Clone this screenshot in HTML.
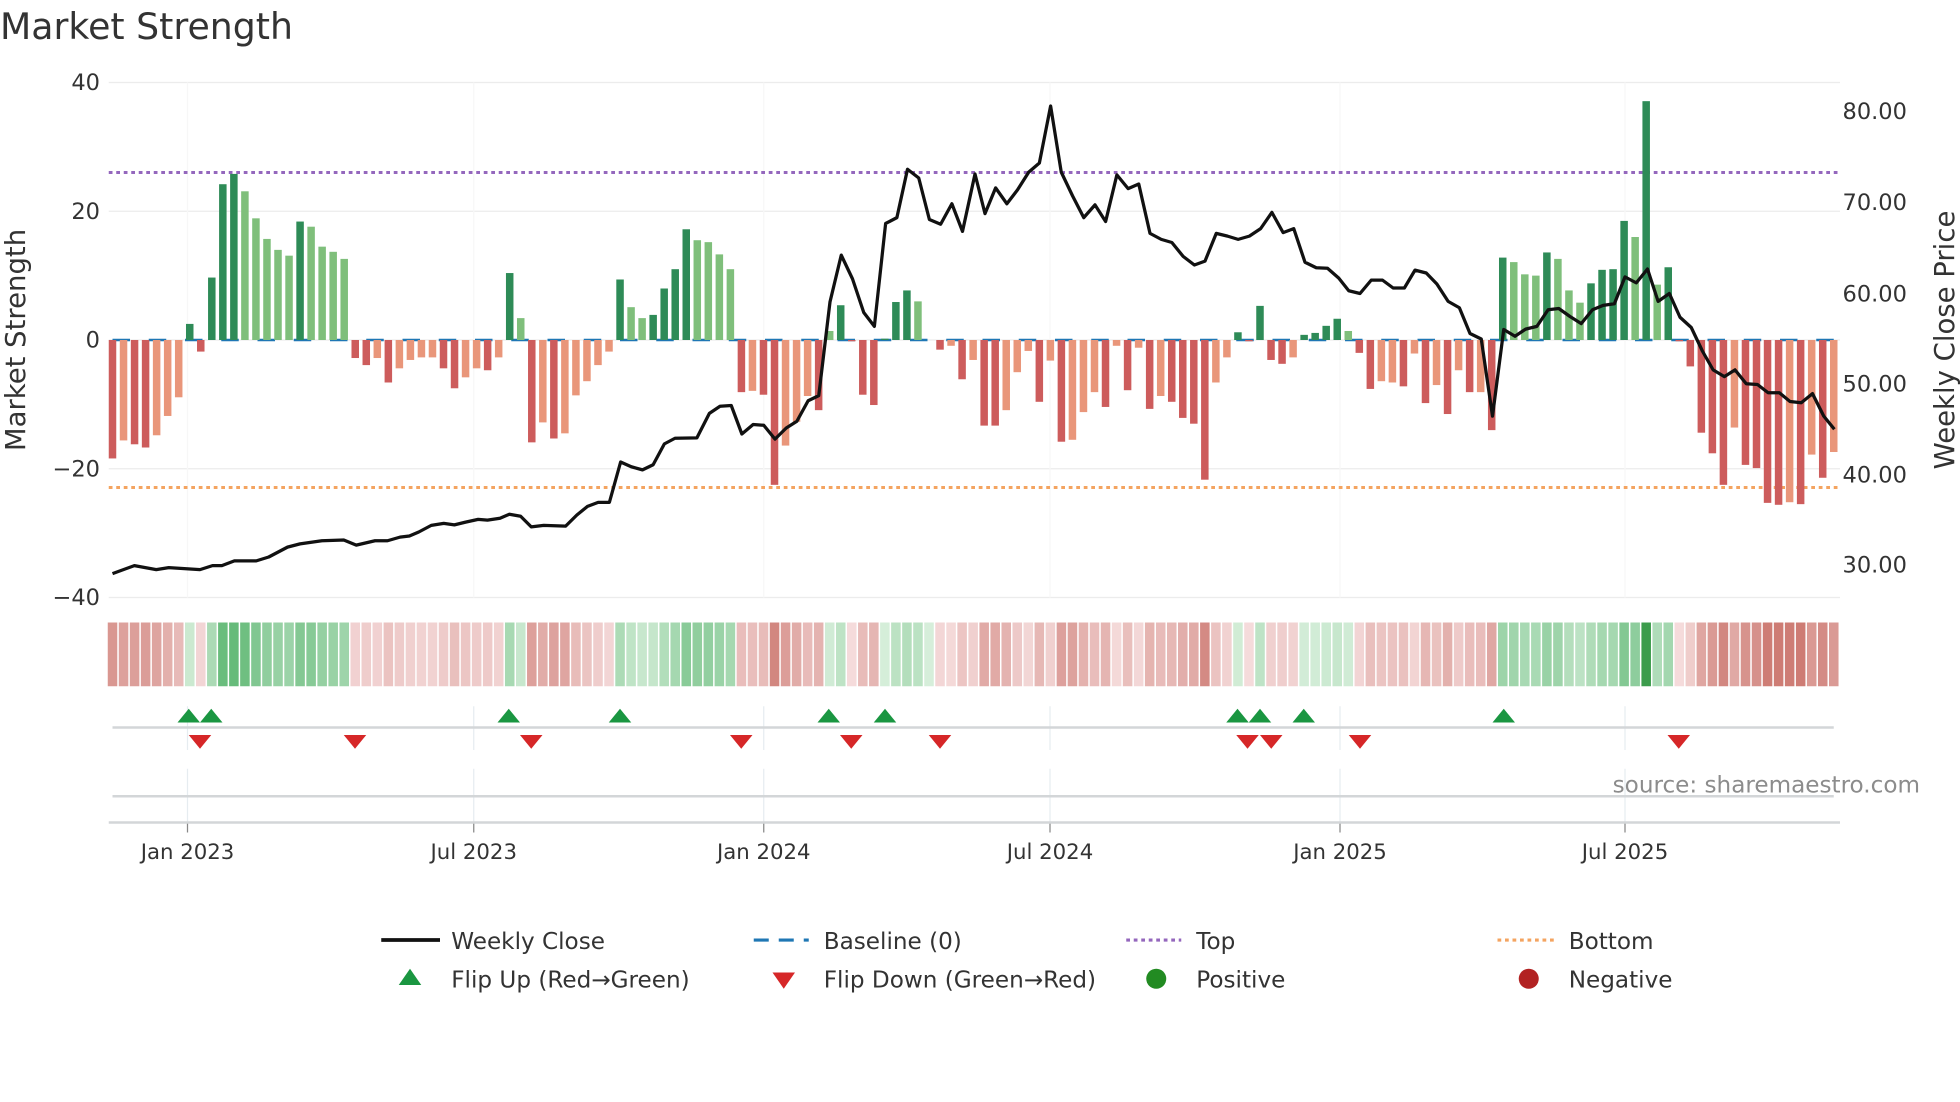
<!DOCTYPE html>
<html><head><meta charset="utf-8">
<style>
html,body{margin:0;padding:0;background:#fff;}
svg{display:block;font-family:"DejaVu Sans","Liberation Sans",sans-serif;}
</style></head>
<body>
<svg id="s" width="1960" height="1102" viewBox="0 0 1568 881.6" xmlns="http://www.w3.org/2000/svg">
<text x="0" y="31" font-size="29" fill="#333">Market Strength</text>
<g id="grid"></g>
<g id="bars"></g>
<g id="strip"></g>
<g id="marks"></g>
<polyline id="line" fill="none" stroke="#111" stroke-width="2.6" stroke-linejoin="round"/>
<g font-size="18" fill="#333" text-anchor="end">
<text x="80" y="72">40</text><text x="80" y="175">20</text><text x="80" y="278">0</text><text x="80" y="381">−20</text><text x="80" y="484">−40</text>
</g>
<g font-size="18" fill="#333">
<text x="1474" y="95">80.00</text><text x="1474" y="168">70.00</text><text x="1474" y="241">60.00</text><text x="1474" y="313">50.00</text><text x="1474" y="386">40.00</text><text x="1474" y="458">30.00</text>
</g>
<text transform="translate(20,272) rotate(-90)" font-size="22" fill="#333" text-anchor="middle">Market Strength</text>
<text transform="translate(1563,272) rotate(-90)" font-size="22" fill="#333" text-anchor="middle">Weekly Close Price</text>
<g font-size="17" fill="#333" text-anchor="middle">
<text x="150" y="687">Jan 2023</text><text x="379" y="687">Jul 2023</text><text x="611" y="687">Jan 2024</text><text x="840" y="687">Jul 2024</text><text x="1072" y="687">Jan 2025</text><text x="1300" y="687">Jul 2025</text>
</g>
<text x="1536" y="634" font-size="18.5" fill="#8c8c8c" text-anchor="end">source: sharemaestro.com</text>
<g font-size="18.5" fill="#333">
<line x1="305" y1="752" x2="352" y2="752" stroke="#111" stroke-width="3"/>
<text x="361" y="759">Weekly Close</text>
<line x1="603" y1="752" x2="647" y2="752" stroke="#1f77b4" stroke-width="2.5" stroke-dasharray="12,8"/>
<text x="659" y="759">Baseline (0)</text>
<line x1="901" y1="752" x2="945" y2="752" stroke="#9467bd" stroke-width="2.5" stroke-dasharray="3,3"/>
<text x="957" y="759">Top</text>
<line x1="1198" y1="752" x2="1243" y2="752" stroke="#f4a460" stroke-width="2.5" stroke-dasharray="3,3"/>
<text x="1255" y="759">Bottom</text>
<polygon points="319,788 337,788 328,775" fill="#1a9641"/>
<text x="361" y="790">Flip Up (Red→Green)</text>
<polygon points="618,778 636,778 627,791" fill="#d62728"/>
<text x="659" y="790">Flip Down (Green→Red)</text>
<circle cx="925" cy="783" r="8" fill="#228b22"/>
<text x="957" y="790">Positive</text>
<circle cx="1223" cy="783" r="8" fill="#b22222"/>
<text x="1255" y="790">Negative</text>
</g>
</svg>
<script>
var NS="http://www.w3.org/2000/svg";
function el(p,t,a){var e=document.createElementNS(NS,t);for(var k in a)e.setAttribute(k,a[k]);p.appendChild(e);return e;}
var data="-18.4R -15.6S -16.2R -16.7R -14.8S -11.8S -8.9S 2.5D -1.8R 9.7D 24.2D 25.8D 23.1L 18.9L 15.7L 14L 13.1L 18.4D 17.6L 14.5L 13.7L 12.6L -2.8R -3.9R -2.8S -6.6R -4.4S -3.1S -2.7S -2.7S -4.4R -7.5R -5.8S -4.4S -4.7R -2.7S 10.4D 3.4L -15.9R -12.8S -15.3R -14.5S -8.6S -6.4S -3.9S -1.8S 9.4D 5.1L 3.4L 3.9D 8D 11D 17.2D 15.5L 15.2L 13.3L 11L -8.1R -7.9S -8.5R -22.5R -16.4S -12.7S -8.7S -10.9R 1.4L 5.4D -0.2R -8.5R -10.1R 0.2D 5.9D 7.7D 6L 0D -1.5R -0.9S -6.1R -3.1S -13.3R -13.3R -10.9S -5S -1.7S -9.6R -3.2S -15.8R -15.5S -11.2S -8.1S -10.4R -0.9S -7.8R -1.2S -10.7R -8.7S -9.6R -12.1R -13R -21.7R -6.6S -2.7S 1.2D -0.2R 5.3D -3.1R -3.7R -2.7S 0.8D 1.1D 2.2D 3.3D 1.4L -2R -7.6R -6.4S -6.6S -7.2R -2.1S -9.8R -7S -11.5R -4.7S -8.1R -8.1S -14R 12.8D 12.1L 10.2L 10L 13.6D 12.6L 7.7L 5.8L 8.8D 10.9D 11D 18.5D 16L 37.1D 8.6L 11.3D -0.2R -4.1R -14.4R -17.6R -22.5R -13.6S -19.4R -19.9R -25.3R -25.6R -25.2S -25.5R -17.8S -21.4R -17.4S".split(" ");
var col={D:"#2e8b57",L:"#7fbf7b",R:"#cd5c5c",S:"#e9967a"};
var grid=document.getElementById("grid"),bars=document.getElementById("bars"),strip=document.getElementById("strip"),marks=document.getElementById("marks");
[66,169,272,375,478].forEach(function(y){el(grid,"line",{x1:87,x2:1472,y1:y,y2:y,stroke:"#ececec","stroke-width":1});});
[150,379,611,840,1072,1300].forEach(function(x){
 el(grid,"line",{x1:x,x2:x,y1:66,y2:478,stroke:"#f7f7f7","stroke-width":1});
 el(grid,"line",{x1:x,x2:x,y1:565,y2:600,stroke:"#e6ecf0","stroke-width":1});
 el(grid,"line",{x1:x,x2:x,y1:615,y2:660,stroke:"#e6ecf0","stroke-width":1});
 el(grid,"line",{x1:x,x2:x,y1:658,y2:666,stroke:"#888","stroke-width":1});
});
var step=(1467-90)/156;
function mix(a,b,t){var r=[];for(var i=0;i<3;i++)r.push(Math.round(a[i]+(b[i]-a[i])*t));return "rgb("+r.join(",")+")";}
data.forEach(function(d,i){
 var v=parseFloat(d),t=d.slice(-1),x=90+i*step;
 var y0=272,y1=272-v*5.15;
 var h=Math.abs(y1-y0);
 if(h>0.3) el(bars,"rect",{x:x-3,y:Math.min(y0,y1),width:6,height:h,fill:col[t]});
 var c;
 if(v>=0){var k=Math.min(v/25,1);c=v>30?"#3c9c4c":mix([214,238,218],[102,187,122],k);}
 else{var k=Math.min(-v/26,1);c=mix([245,220,220],[205,122,114],k);}
 el(strip,"rect",{x:x-4.4+0.6,y:498,width:step-1.2,height:51,fill:c});
});
el(grid,"line",{x1:90,x2:1467,y1:272,y2:272,stroke:"#1f77b4","stroke-width":2,"stroke-dasharray":"14,15"});
el(grid,"line",{x1:87,x2:1472,y1:138,y2:138,stroke:"#9467bd","stroke-width":2.4,"stroke-dasharray":"3,3"});
el(grid,"line",{x1:87,x2:1472,y1:390,y2:390,stroke:"#f4a460","stroke-width":2.4,"stroke-dasharray":"3,3"});
el(marks,"line",{x1:90,x2:1467,y1:582,y2:582,stroke:"#d3d6d8","stroke-width":2});
el(marks,"line",{x1:90,x2:1467,y1:637,y2:637,stroke:"#d3d6d8","stroke-width":2});
el(marks,"line",{x1:87,x2:1472,y1:658,y2:658,stroke:"#d3d6d8","stroke-width":2});
[151,169,407,496,663,708,990,1008,1043,1203].forEach(function(x){el(marks,"polygon",{points:(x-9)+",578 "+(x+9)+",578 "+x+",567",fill:"#1a9641"});});
[160,284,425,593,681,752,998,1017,1088,1343].forEach(function(x){el(marks,"polygon",{points:(x-9)+",588 "+(x+9)+",588 "+x+",599",fill:"#d62728"});});
var z1=[[180,1450],[215,1430],[250,1440],[270,1435],[320,1440],[340,1430],[355,1430],[375,1418],[410,1418],[430,1408],[460,1383],[480,1375],[515,1367],[550,1365],[570,1378],[600,1367],[620,1367],[640,1358],[655,1355],[670,1345],[690,1328],[710,1323],[727,1327],[745,1320],[765,1313],[780,1315],[800,1310],[815,1300],[833,1305],[850,1332],[870,1328],[905,1330],[923,1302],[940,1280],[957,1270],[975,1270],[993,1168],[1010,1180],[1028,1188],[1045,1175],[1063,1122],[1080,1108],[1115,1107],[1135,1045],[1152,1027],[1170,1025],[1187,1097],[1205,1073],[1222,1075],[1240,1110],[1258,1082],[1275,1065],[1293,1013],[1310,1000],[1328,763],[1346,645],[1364,705],[1382,790],[1399,825],[1417,565],[1435,550],[1452,428],[1470,450],[1487,555],[1505,567],[1523,515],[1540,585],[1560,440]];
var z2=[[8,540],[25,475],[43,515],[60,480],[78,435],[95,412],[113,268],[130,435],[148,495],[166,550],[184,518],[201,560],[219,442],[237,477],[254,465],[272,590],[290,605],[307,613],[325,648],[343,670],[360,660],[378,590],[396,597],[413,605],[431,597],[449,578],[467,537],[485,588],[502,578],[520,663],[538,677],[556,678],[574,703],[590,735],[608,742],[626,708],[644,708],[661,728],[679,728],[696,683],[714,690],[731,718],[749,762],[767,778],[784,843],[802,857],[820,1052],[838,833],[856,850],[873,832],[891,825],[909,783],[926,780],[944,800],[962,818],[980,783],[997,772],[1015,768],[1032,700],[1050,715],[1068,680],[1085,762],[1103,742],[1120,802],[1138,828],[1156,888],[1173,935],[1191,952],[1208,935],[1226,970],[1244,972],[1261,993],[1279,993],[1296,1015],[1314,1018],[1332,995],[1350,1052],[1367,1085]];
var pts=[];
z1.forEach(function(p){pts.push((p[0]/2).toFixed(1)+","+(p[1]/3.16).toFixed(1));});
z2.forEach(function(p){pts.push((784+p[0]/2).toFixed(1)+","+(p[1]/3.16).toFixed(1));});
document.getElementById("line").setAttribute("points",pts.join(" "));
</script>
</body></html>
